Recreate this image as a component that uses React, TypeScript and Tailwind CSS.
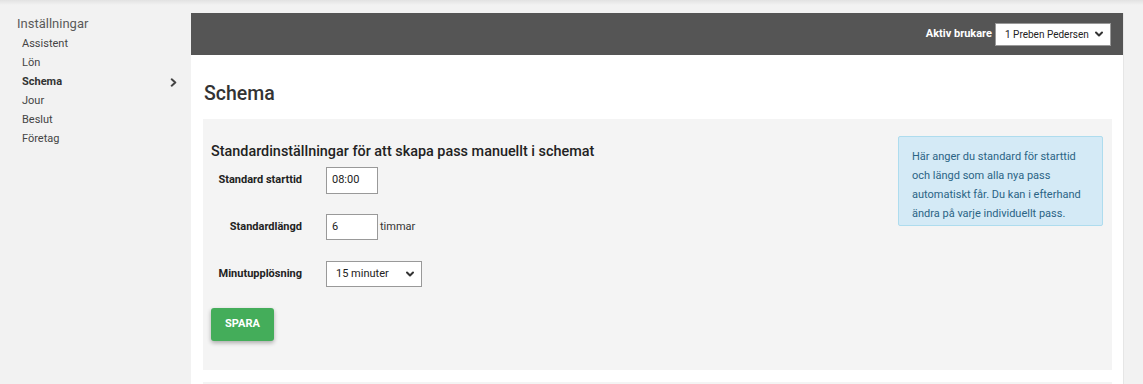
import React from "react";

const Chevron = ({ className }: { className?: string }) => (
  <svg viewBox="0 0 10 10" className={className} fill="none" stroke="currentColor" strokeWidth="2" strokeLinecap="round" strokeLinejoin="round">
    <path d="M2 3.5 L5 6.5 L8 3.5" />
  </svg>
);

export default function App() {
  const font = { fontFamily: "Roboto, 'Liberation Sans', sans-serif" };
  return (
    <div className="w-[1143px] h-[384px] overflow-hidden bg-[#f2f2f2] relative" style={font}>
      <div className="absolute left-0 right-0 top-0 h-[5px] bg-gradient-to-b from-[#e2e2e2] to-[#f2f2f2]" />
      <div className="flex pt-[13px] h-full">
        {/* Sidebar */}
        <div className="w-[191px] shrink-0 text-[#555] pt-[3px]">
          <div className="pl-[17px] text-[13px] leading-[15px] text-[#5a5a5a]">Inställningar</div>
          <div className="mt-[4px] flex flex-col text-[11px] text-[#444]">
            {["Assistent", "Lön", "Schema", "Jour", "Beslut", "Företag"].map((s) => (
              <div key={s} className={`pl-[22px] pr-[13px] h-[19px] flex items-center justify-between ${s === "Schema" ? "font-bold text-[#333]" : ""}`}>
                <span>{s}</span>
                {s === "Schema" && (
                  <svg viewBox="0 0 10 10" className="w-[9px] h-[9px] text-[#444]" fill="none" stroke="currentColor" strokeWidth="2.2" strokeLinecap="round" strokeLinejoin="round">
                    <path d="M3 1.5 L7 5 L3 8.5" />
                  </svg>
                )}
              </div>
            ))}
          </div>
        </div>
        {/* Main */}
        <div className="w-[932px] shrink-0 bg-white">
          <div className="h-[42px] bg-[#555555] flex items-center justify-end pr-[12px]">
            <span className="text-white text-[11px] font-bold mr-[3px]">Aktiv brukare</span>
            <div className="w-[116px] h-[23px] bg-white border border-[#999] flex items-center justify-between pl-[9px] pr-[6px]">
              <span className="text-[10px] text-[#222]">1 Preben Pedersen</span>
              <Chevron className="w-[10px] h-[10px] text-[#333]" />
            </div>
          </div>
          <div className="pl-[12px] pr-[11px]">
            <h1 className="text-[19.5px] font-medium text-[#333] leading-[24px] mt-[27px] pl-[1px]">Schema</h1>
            <div className="mt-[13px] bg-[#f4f4f4] h-[251px] flex justify-between pl-[8px] pr-[9px]">
              <div className="flex flex-col items-start">
                <div className="mt-[24px] text-[14.4px] font-medium text-[#222] leading-[18px]">
                  Standardinställningar för att skapa pass manuellt i schemat
                </div>
                <div className="mt-[6px] flex items-center h-[27px]">
                  <div className="w-[91px] text-right text-[11px] font-bold text-[#222]">Standard starttid</div>
                  <div className="ml-[24px] w-[52px] h-[27px] border border-[#999] bg-white flex items-center pl-[5px] text-[11px] text-[#222]">08:00</div>
                </div>
                <div className="mt-[20px] flex items-center h-[26px]">
                  <div className="w-[91px] text-right text-[11px] font-bold text-[#222]">Standardlängd</div>
                  <div className="ml-[24px] w-[52px] h-[26px] border border-[#999] bg-white flex items-center pl-[5px] text-[11px] text-[#222]">6</div>
                  <span className="ml-[2px] text-[11px] text-[#333]">timmar</span>
                </div>
                <div className="mt-[21px] flex items-center h-[26px]">
                  <div className="w-[91px] text-right text-[11px] font-bold text-[#222]">Minutupplösning</div>
                  <div className="ml-[24px] w-[96px] h-[26px] border border-[#999] bg-white flex items-center justify-between pl-[9px] pr-[6px] text-[11px] text-[#222]">
                    <span>15 minuter</span>
                    <Chevron className="w-[10px] h-[10px] text-[#333]" />
                  </div>
                </div>
                <button className="mt-[21px] w-[63px] h-[33px] bg-[#44ad5a] rounded-[3px] text-white text-[11px] font-bold shadow-[0_2px_4px_rgba(0,0,0,0.3)]">
                  SPARA
                </button>
              </div>
              <div className="mt-[17px] w-[205px] h-[90px] bg-[#d4eaf6] border border-[#aedcee] rounded-[2px] pl-[13px] pr-[14px] pt-[10px] text-[11px] leading-[19px] text-[#2a6485]">
                Här anger du standard för starttid och längd som alla nya pass automatiskt får. Du kan i efterhand ändra på varje individuellt pass.
              </div>
            </div>
            <div className="mt-[12px] bg-[#f4f4f4] h-[20px]" />
          </div>
        </div>
        <div className="flex-1 border-l border-[#e6e6e6]" />
      </div>
    </div>
  );
}
